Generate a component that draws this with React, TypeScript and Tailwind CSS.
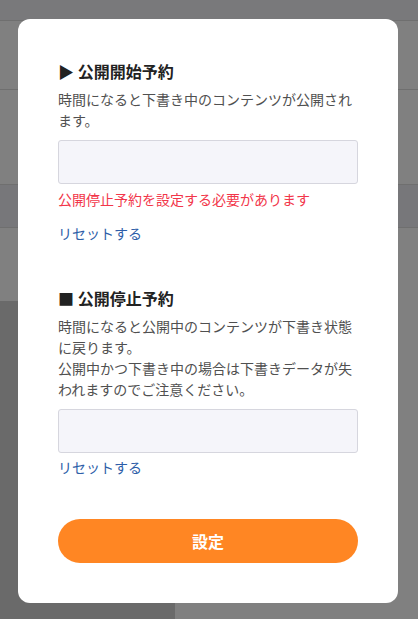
import React from "react";

export default function App() {
  const font = { fontFamily: '"Noto Sans CJK JP", "Noto Sans", sans-serif' };
  return (
    <div className="relative w-[418px] h-[619px] overflow-hidden bg-[#808080]" style={font}>
      {/* dimmed page behind */}
      <div className="flex flex-col h-full">
        <div className="h-[21px] bg-[#79797b] border-b border-[#6f6f6f]" />
        <div className="h-[69px] border-b border-[#6f6f6f]" />
        <div className="h-[95px] border-b border-[#6f6f6f]" />
        <div className="h-[43px] bg-[#77777a] border-b border-[#6f6f6f]" />
        <div className="h-[73px]" />
        <div className="flex flex-1">
          <div className="w-[175px] bg-[#6a6a6a]" />
          <div className="flex-1" />
        </div>
      </div>

      {/* modal */}
      <div className="absolute left-[18px] top-[19px] w-[380px] h-[584px] rounded-[12px] bg-white px-[40px] pt-[40px]">
        <h2 className="text-[16px] leading-[24px] font-bold text-[#222]">▶ 公開開始予約</h2>
        <p className="mt-[6px] text-[14px] leading-[21px] text-[#505050]">
          時間になると下書き中のコンテンツが公開されます。
        </p>
        <div className="mt-[9px] h-[44px] rounded-[3px] border border-[#d6d6de] bg-[#f5f5fa]" />
        <p className="mt-[5px] text-[14px] leading-[21px] text-[#f2364a]">
          公開停止予約を設定する必要があります
        </p>
        <p className="mt-[13px] text-[14px] leading-[21px] text-[#2d5ea8]">リセットする</p>

        <h2 className="mt-[42px] text-[16px] leading-[24px] font-bold text-[#222]">■ 公開停止予約</h2>
        <p className="mt-[6px] text-[14px] leading-[21px] text-[#505050]">
          時間になると公開中のコンテンツが下書き状態に戻ります。
          <br />
          公開中かつ下書き中の場合は下書きデータが失われますのでご注意ください。
        </p>
        <div className="mt-[9px] h-[44px] rounded-[3px] border border-[#d6d6de] bg-[#f5f5fa]" />
        <p className="mt-[4px] text-[14px] leading-[21px] text-[#2d5ea8]">リセットする</p>

        <button className="mt-[41px] w-full h-[44px] rounded-full bg-[#ff8623] text-white text-[16px] font-bold flex items-center justify-center">
          設定
        </button>
      </div>
    </div>
  );
}
